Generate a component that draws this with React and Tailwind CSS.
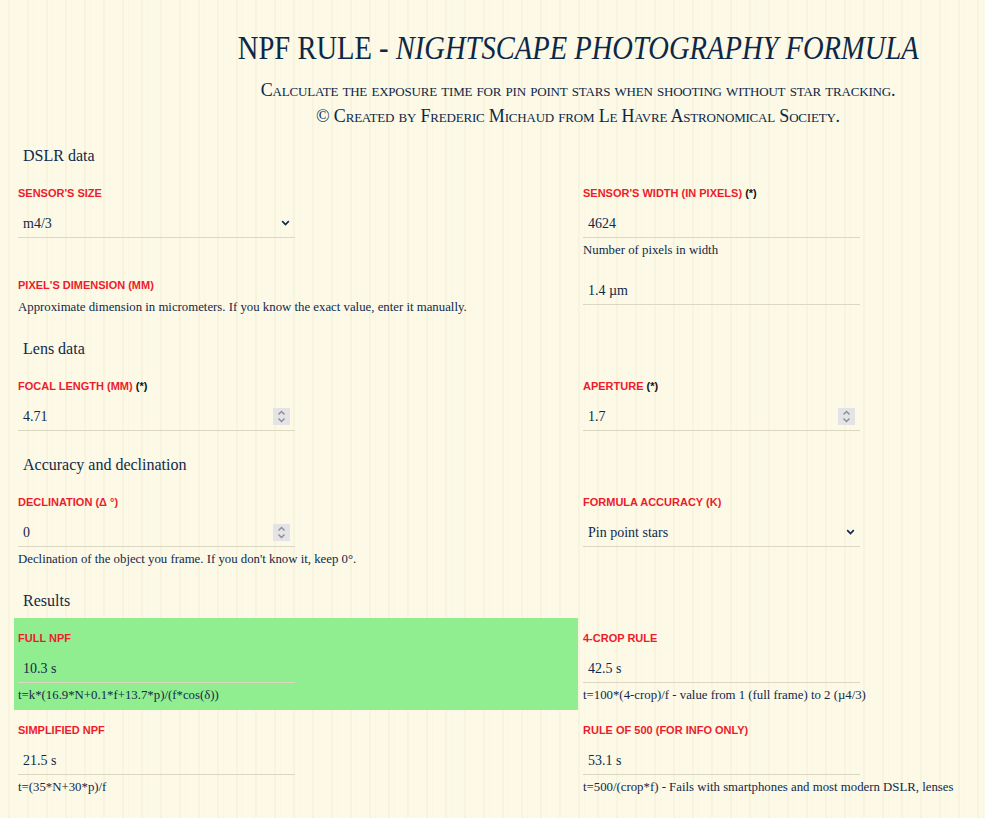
import React from 'react';

const serif = "font-['Liberation_Serif',serif]";
const sans = "font-['Liberation_Sans',sans-serif]";

// small grey spinner box drawn like the browser's number arrows
function Spinner() {
  return (
    <span className="w-[17px] h-[17px] bg-[#e4e3e6] flex items-center justify-center">
      <svg width="9" height="13" viewBox="0 0 9 13" fill="none" stroke="#8d8c96" strokeWidth="1.4">
        <path d="M1.5 4.5 L4.5 1.5 L7.5 4.5" />
        <path d="M1.5 8.5 L4.5 11.5 L7.5 8.5" />
      </svg>
    </span>
  );
}

function Chevron() {
  return (
    <svg width="9" height="6" viewBox="0 0 9 6" fill="none" stroke="#10294a" strokeWidth="1.7">
      <path d="M1.2 1.2 L4.5 4.5 L7.8 1.2" />
    </svg>
  );
}

function Box({ value, kind }) {
  return (
    <div className={`w-[277px] h-[31px] border-b border-[#dcd7c0] pl-[5px] pr-[5px] pt-[2px] flex items-center justify-between text-[14px] text-[#10294a] ${serif}`}>
      <span>{value}</span>
      {kind === 'number' && <Spinner />}
      {kind === 'select' && <Chevron />}
    </div>
  );
}

function Label({ text, star }) {
  return (
    <div className={`text-[11px] leading-[14px] font-bold uppercase text-[#ee1c2b] mb-[7px] ${sans}`}>
      {text}
      {star && <span className="text-[#111]"> (*)</span>}
    </div>
  );
}

function Help({ children }) {
  return (
    <div className={`text-[12.8px] leading-[16px] mt-[4px] text-[#10294a] whitespace-nowrap ${serif}`}>
      {children}
    </div>
  );
}

function Field({ label, star, value, kind, help, right, green, noLabel }) {
  return (
    <div
      className={`${noLabel ? 'pt-[9px]' : 'pt-[13px]'} pb-[7px] ${right ? 'pl-[5px]' : 'pl-[4px]'} ${green ? 'bg-[#90ee90]' : ''}`}
    >
      {!noLabel && <Label text={label} star={star} />}
      <Box value={value} kind={kind} />
      {help && <Help>{help}</Help>}
    </div>
  );
}

function Heading({ children }) {
  return (
    <h2 className={`pl-[9px] text-[16px] leading-[24px] text-[#10294a] mt-[15px] mb-[5px] ${serif}`}>
      {children}
    </h2>
  );
}

export default function App() {
  return (
    <div className="min-h-screen w-full overflow-hidden bg-[#fcf9e7] bg-[repeating-linear-gradient(90deg,transparent_0px,transparent_8px,rgba(214,204,160,0.13)_8px,rgba(214,204,160,0.13)_10px,transparent_10px,transparent_14px,rgba(214,204,160,0.07)_14px,rgba(214,204,160,0.07)_15px,transparent_15px,transparent_19px)]">
      <div className="w-[1156px] px-[14px] pb-[20px]">
        {/* Header */}
        <header className={`text-center text-[#0d2747] pt-[28px] ${serif}`}>
          <h1 className="text-[34px] leading-[40px] whitespace-nowrap">
            <span className="inline-block scale-x-[0.84]">
              NPF RULE - <i>NIGHTSCAPE PHOTOGRAPHY FORMULA</i>
            </span>
          </h1>
          <p className="mt-[9px] text-[18px] leading-[26px] tracking-[-0.2px] [font-variant:small-caps]">
            Calculate the exposure time for pin point stars when shooting without star tracking.
            <br />
            © Created by Frederic Michaud from Le Havre Astronomical Society.
          </p>
        </header>

        {/* DSLR */}
        <Heading>DSLR data</Heading>
        <div className="grid grid-cols-2">
          <Field label="Sensor's size" value="m4/3" kind="select" />
          <Field label="Sensor's width (in pixels)" star value="4624" help="Number of pixels in width" right />
          <div className="pt-[13px] pb-[7px] pl-[4px]">
            <Label text="Pixel's dimension (mm)" />
            <Help>Approximate dimension in micrometers. If you know the exact value, enter it manually.</Help>
          </div>
          <Field value="1.4 µm" right noLabel />
        </div>

        {/* Lens */}
        <Heading>Lens data</Heading>
        <div className="grid grid-cols-2">
          <Field label="Focal length (mm)" star value="4.71" kind="number" />
          <Field label="Aperture" star value="1.7" kind="number" right />
        </div>

        {/* Accuracy */}
        <Heading>Accuracy and declination</Heading>
        <div className="grid grid-cols-2">
          <Field
            label="Declination (Δ °)"
            value="0"
            kind="number"
            help="Declination of the object you frame. If you don't know it, keep 0°."
          />
          <Field label="Formula accuracy (k)" value="Pin point stars" kind="select" right />
        </div>

        {/* Results */}
        <Heading>Results</Heading>
        <div className="grid grid-cols-2">
          <Field label="Full NPF" value="10.3 s" help="t=k*(16.9*N+0.1*f+13.7*p)/(f*cos(δ))" green />
          <Field label="4-crop rule" value="42.5 s" help="t=100*(4-crop)/f - value from 1 (full frame) to 2 (µ4/3)" right />
          <Field label="Simplified NPF" value="21.5 s" help="t=(35*N+30*p)/f" />
          <Field
            label="Rule of 500 (for info only)"
            value="53.1 s"
            help="t=500/(crop*f) - Fails with smartphones and most modern DSLR, lenses"
            right
          />
        </div>
      </div>
    </div>
  );
}
